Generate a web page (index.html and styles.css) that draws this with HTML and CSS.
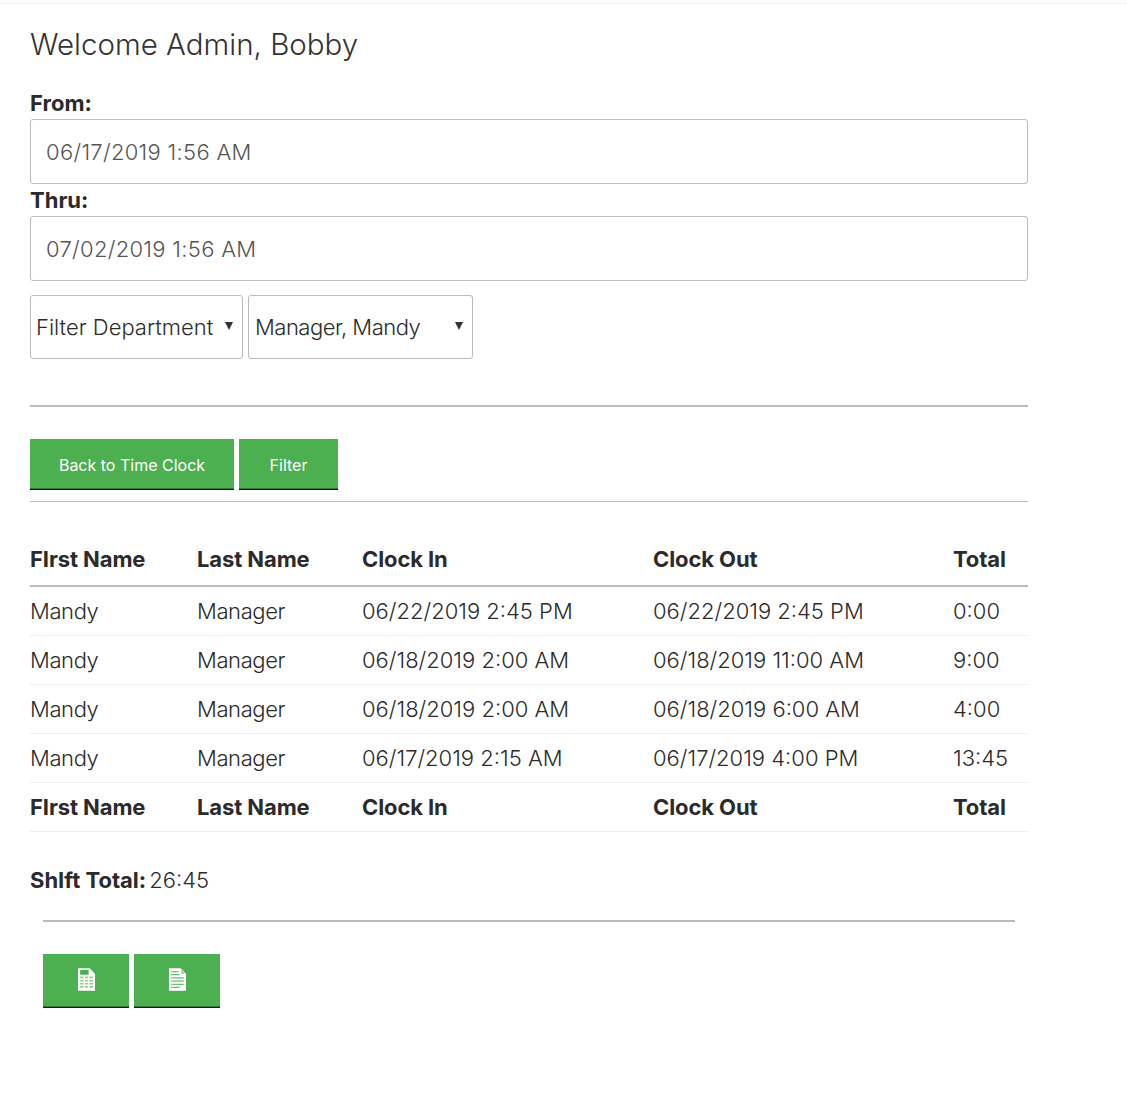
FILE: index.html
```html
<!DOCTYPE html>
<html lang="en">
<head>
    <meta charset="UTF-8">
    <meta name="viewport" content="width=device-width, initial-scale=1.0">
    <title>Time Clock Admin</title>
    <link rel="stylesheet" href="styles.css">
</head>
<body>
    <div class="page">
        <h1>Welcome Admin, Bobby</h1>
        <form class="filters">
            <label for="from">From:</label>
            <input type="text" id="from" value="06/17/2019 1:56 AM">
            <label for="thru">Thru:</label>
            <input type="text" id="thru" value="07/02/2019 1:56 AM">
            <div class="selects">
                <div class="select select-dept">Filter Department<span class="caret"></span></div>
                <div class="select select-emp">Manager, Mandy<span class="caret"></span></div>
            </div>
            <hr class="rule rule-filters">
            <div class="buttons">
                <button type="button" class="btn btn-back">Back to Time Clock</button>
                <button type="button" class="btn btn-filter">Filter</button>
            </div>
        </form>
        <hr class="rule rule-thin">
        <table>
            <thead>
                <tr>
                    <th class="col-first">FIrst Name</th>
                    <th class="col-last">Last Name</th>
                    <th class="col-in">Clock In</th>
                    <th class="col-out">Clock Out</th>
                    <th>Total</th>
                </tr>
            </thead>
            <tbody>
                <tr><td>Mandy</td><td>Manager</td><td>06/22/2019 2:45 PM</td><td>06/22/2019 2:45 PM</td><td>0:00</td></tr>
                <tr><td>Mandy</td><td>Manager</td><td>06/18/2019 2:00 AM</td><td>06/18/2019 11:00 AM</td><td>9:00</td></tr>
                <tr><td>Mandy</td><td>Manager</td><td>06/18/2019 2:00 AM</td><td>06/18/2019 6:00 AM</td><td>4:00</td></tr>
                <tr><td>Mandy</td><td>Manager</td><td>06/17/2019 2:15 AM</td><td>06/17/2019 4:00 PM</td><td>13:45</td></tr>
            </tbody>
            <tfoot>
                <tr>
                    <th>FIrst Name</th>
                    <th>Last Name</th>
                    <th>Clock In</th>
                    <th>Clock Out</th>
                    <th>Total</th>
                </tr>
            </tfoot>
        </table>
        <p class="shift-total"><strong>ShIft Total:</strong> 26:45</p>
        <div class="export">
            <hr class="rule rule-filters">
            <div class="buttons">
                <button type="button" class="btn btn-icon" aria-label="Export spreadsheet">
                    <svg width="17" height="23" viewBox="1 1 16 21">
                        <path d="M1 1H12L17 6V22H1Z" fill="#fff"/>
                        <path d="M3 2.5H11V7H3Z" fill="#4caf50"/>
                        <path d="M3 9.5H15M3 12.5H15M3 15.5H15M3 18.5H15" stroke="#8fd092" stroke-width="1.6"/>
                        <path d="M7 8V20M11 8V20" stroke="#fff" stroke-width="1.4"/>
                    </svg>
                </button>
                <button type="button" class="btn btn-icon" aria-label="Export document">
                    <svg width="17" height="23" viewBox="1 1 16 21">
                        <path d="M1 1H12L17 6V22H1Z" fill="#fff"/>
                        <path d="M12.5 2L16 6H12.5Z" fill="#8fd092"/>
                        <path d="M3 4H10M3 7H11M3 10H15M3 13H15M3 16H15M3 19H11" stroke="#6cc070" stroke-width="1.2"/>
                    </svg>
                </button>
            </div>
        </div>
    </div>
</body>
</html>
```

FILE: styles.css
```css
body {
    margin: 0;
    background: #fff;
    color: #2b2b2b;
    font-family: Inter, "Liberation Sans", sans-serif;
    font-size: 22px;
    font-weight: 300;
}
.page {
    border-top: 1px solid #eee;
    margin-top: 3px;
    padding: 0 99px 85px 30px;
}
h1 {
    margin: 0;
    padding-top: 21px;
    font-size: 29.5px;
    font-weight: 300;
    line-height: 39px;
    height: 64px;
    color: #333;
}
label {
    display: block;
    font-weight: 700;
    line-height: 28px;
    height: 30px;
}
input {
    display: block;
    box-sizing: border-box;
    width: 100%;
    height: 65px;
    padding: 0 15px;
    margin: 0 0 2px;
    border: 1px solid #bbb;
    border-radius: 3px;
    font: inherit;
    letter-spacing: 0.3px;
    color: #555;
}
.selects {
    display: flex;
    gap: 5px;
    margin-top: 14px;
}
.select {
    box-sizing: border-box;
    display: flex;
    align-items: center;
    justify-content: space-between;
    height: 64px;
    padding: 0 9px 0 5px;
    border: 1px solid #bbb;
    border-radius: 3px;
}
.select-dept { width: 213px; }
.select-emp {
    width: 225px;
    padding-left: 6px;
    letter-spacing: -0.5px;
}
.caret {
    width: 0;
    height: 0;
    margin-bottom: 3px;
    border-left: 4px solid transparent;
    border-right: 4px solid transparent;
    border-top: 8px solid #333;
}
.rule {
    margin: 0;
    border: 0;
    background: #bbb;
}
.rule-filters {
    height: 2px;
    margin-top: 46px;
}
.rule-thin {
    height: 1px;
    margin-top: 11px;
}
.buttons {
    display: flex;
    gap: 5px;
    margin-top: 32px;
}
.btn {
    box-sizing: border-box;
    display: flex;
    align-items: center;
    justify-content: center;
    height: 51px;
    padding: 2px 0 0;
    border: 0;
    border-bottom: 1px solid #111;
    box-shadow: inset 0 -1px 0 #2e7d32;
    background: #4caf50;
    color: #fff;
    font: inherit;
    font-size: 16px;
    font-weight: 400;
}
.btn-back { width: 204px; }
.btn-filter { width: 99px; }
.btn-icon {
    width: 86px;
    height: 54px;
    padding: 0 0 2px;
}
table {
    width: 100%;
    margin-top: 32px;
    border-collapse: collapse;
    table-layout: fixed;
}
th, td {
    height: 48px;
    padding: 0;
    text-align: left;
    border-bottom: 1px solid #eee;
}
th {
    font-weight: 700;
    letter-spacing: -0.1px;
}
td:nth-child(-n+2) { letter-spacing: -0.4px; }
thead th {
    height: 50px;
    padding-bottom: 1px;
    border-bottom: 2px solid #bbb;
}
.col-first { width: 167px; }
.col-last { width: 165px; }
.col-in { width: 291px; }
.col-out { width: 300px; }
.shift-total {
    margin: 33px 0 0;
    line-height: 30px;
}
.shift-total strong {
    font-weight: 700;
    margin-right: -3px;
}
.export {
    margin: 0 13px;
}
.export .rule-filters {
    margin-top: 25px;
}
```
